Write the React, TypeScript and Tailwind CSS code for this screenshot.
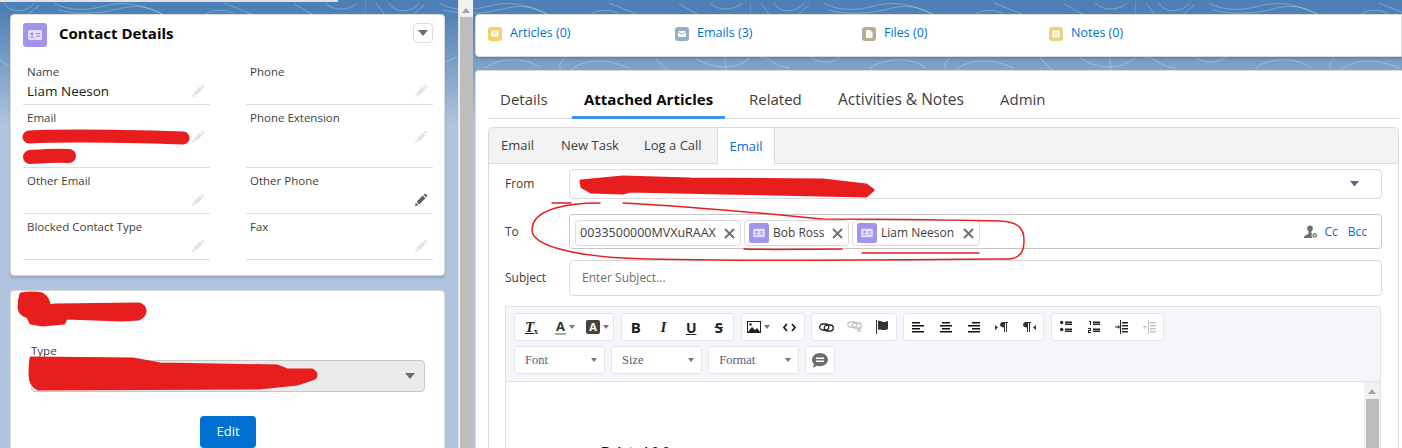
import React from 'react';

const ContactGlyph = ({ size }: { size: number }) => (
  <svg width={size} height={size} viewBox="0 0 24 24">
    <rect width="24" height="24" rx="3" fill="#a094ed" />
    <rect x="5" y="7" width="14" height="10" rx="1.5" fill="#e4e0fb" />
    <circle cx="9" cy="10.8" r="1.6" fill="#a094ed" />
    <path d="M6.6 14.8c.3-1.6 4.5-1.6 4.8 0z" fill="#a094ed" />
    <rect x="13" y="10" width="4" height="1.2" fill="#a094ed" />
    <rect x="13" y="12.6" width="4" height="1.2" fill="#a094ed" />
  </svg>
);

const PencilGlyph = ({ dark }: { dark?: boolean }) => (
  <svg width="14" height="14" viewBox="0 0 14 14" fill={dark ? '#5c5c5c' : '#e3e3e3'}>
    <path d="M1 13l.8-3.4 2.6 2.6zM2.6 8.8L8.8 2.6l2.6 2.6-6.2 6.2zM9.6 1.8l.8-.8c.4-.4 1-.4 1.3 0l1.3 1.3c.4.4.4.9 0 1.3l-.8.8z" />
  </svg>
);

const Caret = ({ color = '#706e6b', w = 10 }: { color?: string; w?: number }) => (
  <svg width={w} height={w * 0.6} viewBox="0 0 10 6">
    <path d="M0 0h10L5 6z" fill={color} />
  </svg>
);

const Field = ({ label, value, dark, tall }: { label: string; value?: string; dark?: boolean; tall?: boolean }) => (
  <div className={`relative border-b border-[#d8dde6] pl-[4px] pt-[5px] ${tall ? 'h-[63px]' : 'h-[46px]'}`}>
    <div className="text-[11.5px] leading-[16px] text-[#3e3e3c]">{label}</div>
    {value && <div className="text-[13.5px] leading-[20px] mt-[1px] text-[#181818]">{value}</div>}
    <div className="absolute right-[5px] top-[25px]">
      <PencilGlyph dark={dark} />
    </div>
  </div>
);

const TileIcon = ({ color, children }: { color: string; children: React.ReactNode }) => (
  <svg width="14" height="14" viewBox="0 0 14 14" className="shrink-0">
    <rect width="14" height="14" rx="3" fill={color} />
    {children}
  </svg>
);

const Related = ({ icon, label }: { icon: React.ReactNode; label: string }) => (
  <div className="w-[187px] flex items-center gap-[8px] text-[12.5px] text-[#0070d2]">
    {icon}
    <span>{label}</span>
  </div>
);

const Btn = ({ w = 27.75, children }: { w?: number; children: React.ReactNode }) => (
  <div className="flex items-center justify-center h-full" style={{ width: w }}>
    {children}
  </div>
);

const Group = ({ children }: { children: React.ReactNode }) => (
  <div className="h-[28px] flex items-center bg-white border border-[#e1e5ee] rounded-[3px]">{children}</div>
);

const Tool = ({ d, fill = '#111111' }: { d: string; fill?: string }) => (
  <svg width="14" height="14" viewBox="0 0 14 14">
    <path d={d} fill={fill} />
  </svg>
);

const lines = (rows: [number, number, number][]) =>
  rows.map(([x, y, w]) => `M${x} ${y}h${w}v1.6h-${w}z`).join('');

const SmallCaret = () => (
  <svg width="6" height="4" viewBox="0 0 6 4" className="ml-[3px]">
    <path d="M0 0h6L3 4z" fill="#777" />
  </svg>
);

const Drop = ({ label }: { label: string }) => (
  <div className="w-[90.5px] h-[28px] flex items-center justify-between pl-[10px] pr-[7px] bg-white border border-[#e1e5ee] rounded-[3px] text-[12.5px] text-[#5c5c70] font-['Liberation_Serif',serif]">
    <span>{label}</span>
    <SmallCaret />
  </div>
);

const Chip = ({ label, contact, w }: { label: string; contact?: boolean; w: number }) => (
  <div
    className={`h-[26px] flex items-center justify-between pl-[4px] pr-[5px] border border-[#dddbda] rounded-[4px] bg-white text-[#3e3e3c] ${contact ? 'text-[12px]' : 'text-[12.5px]'}`}
    style={{ width: w }}
  >
    <div className="flex items-center gap-[4px]">
      {contact && <ContactGlyph size={20} />}
      <span>{label}</span>
    </div>
    <svg width="11" height="11" viewBox="0 0 11 11">
      <path d="M1 1l9 9M10 1l-9 9" stroke="#706e6b" strokeWidth="1.8" />
    </svg>
  </div>
);

const FormRow = ({ label, h, mt, children, cls }: { label: string; h: number; mt: number; children: React.ReactNode; cls?: string }) => (
  <div className="flex items-center" style={{ marginTop: mt }}>
    <div className="w-[64px] text-[12px] text-[#3e3e3c]">{label}</div>
    <div
      className={`w-[813px] flex items-center border rounded-[4px] bg-white ${cls ?? 'border-[#dddbda]'}`}
      style={{ height: h }}
    >
      {children}
    </div>
  </div>
);

export default function App() {
  return (
    <div className="relative w-[1402px] h-[448px] overflow-hidden font-['Open_Sans',sans-serif] bg-gradient-to-b from-[#4c80b6] from-[10px] to-[#b0c4de] to-[125px]">
      {/* contour lines of the page backdrop, the tile repeats every 385px */}
      <svg className="absolute left-0 top-0" width="1402" height="130" fill="none">
        <defs>
          <pattern id="contour" x="-20" y="0" width="385" height="130" patternUnits="userSpaceOnUse">
            <g stroke="#ffffff" strokeOpacity="0.28">
              <path d="M0 2v12M11 3l8 11M24 3c4 10 24 10 30 0M59 5l-10 9" />
              <path d="M74 3c14 8 32 8 50 3 24-6 40 0 60 9" />
              <path d="M78 10c20 5 40 4 60-1s30-3 50 8" />
              <path d="M226 14c8-5 20-5 28 0M244 3l30 12M314 4l20 11M345 3c8 8 24 8 32 0" />
              <path d="M10 58c8-3 12 8 30 10M60 56c6 8 24 8 32 0M120 68c14-10 40-12 56 0M200 58c-6 4-6 8-4 12M206 70c8-8 30-14 58-2M290 58l12 12M330 58c20 12 40 12 55 0" />
              <path d="M0 100c8 6 14 14 6 24M352 40c12 14 4 30 16 44M368 84c-8 8-4 20 8 26" />
            </g>
          </pattern>
        </defs>
        <rect width="1402" height="130" fill="url(#contour)" />
      </svg>
      <div className="absolute left-0 top-0 w-[338px] h-[2px] bg-[#dfe3e8]" />

      <div className="relative flex h-full">
        {/* left column */}
        <div className="w-[458px] shrink-0 pl-[10px] pr-[13px] pt-[14px] flex flex-col gap-[14px]">
          <div className="h-[262px] shrink-0 bg-white rounded-[4px] border border-[#dddbda] shadow-[0_2px_2px_rgba(0,0,0,0.15)] px-[12px] pt-[8px]">
            <div className="flex items-center h-[24px]">
              <ContactGlyph size={24} />
              <div className="ml-[12px] -mt-[4px] text-[15px] font-bold text-[#080707]">Contact Details</div>
              <div className="ml-auto w-[20px] h-[20px] -mr-[1px] -mt-[4px] border border-[#dddbda] rounded-[4px] flex items-center justify-center">
                <Caret />
              </div>
            </div>
            <div className="grid grid-cols-[187px_187px] gap-x-[36px] mt-[12px]">
              <Field label="Name" value="Liam Neeson" />
              <Field label="Phone" />
              <Field label="Email" tall />
              <Field label="Phone Extension" tall />
              <Field label="Other Email" />
              <Field label="Other Phone" dark />
              <Field label="Blocked Contact Type" />
              <Field label="Fax" />
            </div>
          </div>

          <div className="flex-1 bg-white rounded-t-[4px] border border-[#dddbda] pl-[20px] pr-[19px] pt-[53px]">
            <div className="text-[11.5px] leading-[14px] text-[#3e3e3c]">Type</div>
            <div className="h-[32px] mt-[2px] bg-[#ecebea] border border-[#c9c7c5] rounded-[4px] flex items-center justify-end pr-[9px]">
              <Caret />
            </div>
            <div className="mt-[24px] mx-auto w-[56px] h-[32px] rounded-[4px] bg-[#0070d2] text-white text-[13px] flex items-center justify-center">
              Edit
            </div>
          </div>
        </div>

        {/* page scrollbar */}
        <div className="w-[15px] shrink-0 bg-[#f1f1f1] flex flex-col items-end border-l border-[#e3e3e3]">
          <svg width="8" height="5" viewBox="0 0 8 5" className="mt-[8px] mb-[4px] mr-[3px]">
            <path d="M0 5h8L4 0z" fill="#a3a3a3" />
          </svg>
          <div className="flex-1 w-[13px] bg-[#bdbdbd]" />
        </div>

        {/* right column */}
        <div className="flex-1 pt-[14px] pl-[2px] flex flex-col">
          <div className="h-[43px] shrink-0 bg-white rounded-l-[4px] border border-[#dddbda] shadow-[0_2px_2px_rgba(0,0,0,0.15)] flex items-center pl-[12px] pb-[4px]">
            <Related
              label="Articles (0)"
              icon={
                <TileIcon color="#f4d167">
                  <rect x="3.5" y="3.5" width="7" height="6" rx="1" fill="#fff" />
                  <rect x="5.5" y="4.5" width="1" height="3" fill="#f4d167" />
                  <rect x="7.5" y="4.5" width="1" height="3" fill="#f4d167" />
                </TileIcon>
              }
            />
            <Related
              label="Emails (3)"
              icon={
                <TileIcon color="#95aec5">
                  <rect x="3" y="4" width="8" height="6" rx="1" fill="#fff" />
                  <path d="M3 4.8l4 2.6 4-2.6" stroke="#95aec5" fill="none" />
                </TileIcon>
              }
            />
            <Related
              label="Files (0)"
              icon={
                <TileIcon color="#baac93">
                  <path d="M4 3h4l2.5 2.5V11H4z" fill="#fff" />
                </TileIcon>
              }
            />
            <Related
              label="Notes (0)"
              icon={
                <TileIcon color="#e6d478">
                  <rect x="3.5" y="3.5" width="7" height="7" rx="1" fill="#fff" />
                  <rect x="5" y="5.5" width="4" height="1" fill="#e6d478" />
                  <rect x="5" y="7.5" width="4" height="1" fill="#e6d478" />
                </TileIcon>
              }
            />
          </div>

          <div className="mt-[13px] flex-1 bg-white border-t border-l border-[#dddbda] rounded-tl-[4px] pl-[12px] pr-[3px]">
            {/* record tabs */}
            <div className="flex h-[48px] border-b border-[#dddbda] text-[15px] leading-[20px] text-[#3e3e3c]">
              <div className="w-[84px] pl-[12px] pt-[18px]">Details</div>
              <div className="w-[153px] pl-[12px] pt-[18px] font-bold text-[#080707] border-b-[3px] border-[#3f93f5] h-[48px]">
                Attached Articles
              </div>
              <div className="w-[89px] pl-[24px] pt-[18px]">Related</div>
              <div className="w-[162px] pl-[24px] pt-[18px] whitespace-nowrap text-[15.5px]">Activities &amp; Notes</div>
              <div className="pl-[24px] pt-[18px]">Admin</div>
            </div>

            <div className="mt-[8px] border border-[#dddbda] rounded-t-[4px] h-[400px]">
              {/* publisher tabs */}
              <div className="flex h-[36px] bg-[#f3f3f3] border-b border-[#dddbda] text-[13px] text-[#3e3e3c] rounded-t-[4px]">
                <div className="w-[72px] pl-[12px] flex items-center">Email</div>
                <div className="w-[83px] flex items-center">New Task</div>
                <div className="w-[73px] flex items-center">Log a Call</div>
                <div className="w-[58px] flex items-center justify-center bg-white border-x border-[#dddbda] h-[37px] text-[#0070d2]">
                  Email
                </div>
              </div>

              <div className="pl-[16px]">
                <FormRow label="From" h={30} mt={5}>
                  <div className="ml-auto mr-[22px]">
                    <Caret color="#54698d" w={9} />
                  </div>
                </FormRow>
                <FormRow label="To" h={35} mt={15} cls="border-[#c9c7c5]">
                  <div className="ml-[5px] mt-[3px] flex gap-[3px]">
                    <Chip label="0033500000MVXuRAAX" w={166} />
                    <Chip label="Bob Ross" contact w={105} />
                    <Chip label="Liam Neeson" contact w={128} />
                  </div>
                  <div className="ml-auto mr-[14px] flex items-center text-[12px] text-[#0070d2]">
                    <svg width="14" height="14" viewBox="0 0 14 14" className="mr-[6px]">
                      <circle cx="6" cy="3.4" r="2.8" fill="#706e6b" />
                      <path d="M4.6 6h2.8v2.4L10 9.6v3.4H0v-1.6l4.6-3z" fill="#706e6b" />
                      <circle cx="10.6" cy="10.4" r="2.7" fill="#706e6b" stroke="#fff" strokeWidth="1" />
                      <circle cx="10.6" cy="10.4" r="0.9" fill="#fff" />
                    </svg>
                    <span>Cc</span>
                    <span className="ml-[10px]">Bcc</span>
                  </div>
                </FormRow>
                <FormRow label="Subject" h={36} mt={11}>
                  <span className="ml-[12px] text-[12px] text-[#706e6b]">Enter Subject...</span>
                </FormRow>

                {/* rich text editor */}
                <div className="mt-[10px] w-[876px] border border-[#dfe3ec] h-[160px]">
                  <div className="h-[75px] bg-[#f4f6f9] border-b border-[#dfe3ec] pl-[8px] pt-[6px] flex flex-col gap-[5px]">
                    <div className="flex gap-[6.8px]">
                      <Group>
                        <Btn w={33}><span className="text-[15px] font-bold italic underline text-[#222] font-['Liberation_Serif',serif]">T<sub className="text-[8px] not-italic">x</sub></span></Btn>
                        <Btn w={34}>
                          <span className="text-[13px] font-bold text-[#333] border-b-2 border-[#aaa] leading-[13px] px-[1px]">A</span>
                          <SmallCaret />
                        </Btn>
                        <Btn w={31}>
                          <span className="w-[14px] h-[14px] rounded-[2px] bg-[#444] text-white text-[11px] font-bold flex items-center justify-center">A</span>
                          <SmallCaret />
                        </Btn>
                      </Group>
                      <Group>
                        <Btn><span className="text-[15px] font-bold text-[#222]">B</span></Btn>
                        <Btn><span className="text-[15px] font-bold italic text-[#222] font-['Liberation_Serif',serif]">I</span></Btn>
                        <Btn><span className="text-[14px] font-bold underline text-[#222]">U</span></Btn>
                        <Btn><span className="text-[15px] font-bold line-through text-[#222]">S</span></Btn>
                      </Group>
                      <Group>
                        <Btn w={33}>
                          <svg width="14" height="12" viewBox="0 0 14 12">
                            <rect x="0.5" y="0.5" width="13" height="11" fill="#fff" stroke="#222" />
                            <path d="M1 11l4-5 3 3 2-2 3 4z" fill="#222" />
                            <circle cx="3.5" cy="3.5" r="1.2" fill="#222" />
                          </svg>
                          <SmallCaret />
                        </Btn>
                        <Btn w={29}>
                          <svg width="13" height="9" viewBox="0 0 13 9" fill="none" stroke="#222" strokeWidth="1.8">
                            <path d="M4 1L1 4.5 4 8M9 1l3 3.5L9 8" />
                          </svg>
                        </Btn>
                      </Group>
                      <Group>
                        <Btn>
                          <svg width="15" height="9" viewBox="0 0 15 9" fill="none" stroke="#222" strokeWidth="1.3">
                            <rect x="0.7" y="1" width="9" height="6" rx="3" />
                            <rect x="5.3" y="2" width="9" height="6" rx="3" />
                          </svg>
                        </Btn>
                        <Btn>
                          <svg width="15" height="12" viewBox="0 0 15 12" fill="none" stroke="#c4c4c4" strokeWidth="1.3">
                            <rect x="0.7" y="1" width="9" height="5" rx="2.5" />
                            <rect x="5.3" y="2" width="9" height="5" rx="2.5" />
                            <path d="M10 7l4 4M14 7l-4 4" />
                          </svg>
                        </Btn>
                        <Btn>
                          <Tool d="M1 0h1v14H1zM3 1c3-1 4 1 5 1s3 0 5-1v8c-2 1-3 1-5 1s-2-1-5 0z" fill="#333" />
                        </Btn>
                      </Group>
                      <Group>
                        <Btn><Tool d={lines([[1, 2, 8], [1, 5, 12], [1, 8, 8], [1, 11, 12]])} /></Btn>
                        <Btn><Tool d={lines([[3, 2, 8], [1, 5, 12], [3, 8, 8], [1, 11, 12]])} /></Btn>
                        <Btn><Tool d={lines([[5, 2, 8], [1, 5, 12], [5, 8, 8], [1, 11, 12]])} /></Btn>
                        <Btn><Tool d="M0 5l3 2.5L0 10zM7 2h6v1h-1v9h-1V3h-1v9H9V7.5C7 7.5 5 6.5 5 4.8S7 2 7 2z" fill="#333" /></Btn>
                        <Btn><Tool d="M3 2h6v1H8v9H7V3H6v9H5V7.5C3 7.5 1 6.5 1 4.8S3 2 3 2zM14 5v5l-3-2.5z" fill="#333" /></Btn>
                      </Group>
                      <Group>
                        <Btn><Tool d={`M1 2.5a1.7 1.7 0 1 0 3.4 0 1.7 1.7 0 1 0-3.4 0zM1 9.5a1.7 1.7 0 1 0 3.4 0 1.7 1.7 0 1 0-3.4 0z${lines([[6, 1.5, 7], [6, 3.5, 7], [6, 8.5, 7], [6, 10.5, 7]])}`} fill="#222" /></Btn>
                        <Btn><Tool d={`M2 1h2v4H3V2H2zM1 8h3v3H2v1h2v1H1v-3h2V9H1z${lines([[6, 1.5, 7], [6, 3.5, 7], [6, 8.5, 7], [6, 10.5, 7]])}`} fill="#222" /></Btn>
                        <Btn><Tool d={`M6 0h1v14H6zM1 6.5h3V5l2 2-2 2V7.5H1z${lines([[8, 2, 6], [8, 5, 6], [8, 8, 6], [8, 11, 6]])}`} fill="#222" /></Btn>
                        <Btn><Tool d={`M6 0h1v14H6zM5 6.5H3V5L1 7l2 2V7.5h2z${lines([[8, 2, 6], [8, 5, 6], [8, 8, 6], [8, 11, 6]])}`} fill="#c4c4c4" /></Btn>
                      </Group>
                    </div>
                    <div className="flex gap-[6.6px]">
                      <Drop label="Font" />
                      <Drop label="Size" />
                      <Drop label="Format" />
                      <div className="w-[30px] h-[28px] bg-white border border-[#e1e5ee] rounded-[3px] flex items-center justify-center">
                        <svg width="16" height="15" viewBox="0 0 16 15">
                          <path d="M8 0c4.4 0 8 2.9 8 6.6s-3.6 6.6-8 6.6c-1.2 0-2.2-.2-3.2-.5L1 15l1-3.7C.7 10.1 0 8.5 0 6.6 0 2.9 3.6 0 8 0z" fill="#706e6b" />
                          <path d="M4 4.5h8v1.4H4zM4 7.5h8v1.4H4z" fill="#fff" />
                        </svg>
                      </div>
                    </div>
                  </div>
                  <div className="flex">
                    <div className="flex-1 pl-[95px] pt-[62px] text-[13px] leading-[16px] font-bold text-[#111111] font-['Liberation_Sans',sans-serif]">
                      Related 0.0
                    </div>
                    <div className="w-[16px] h-[80px] bg-[#f1f1f1] flex flex-col items-center">
                      <svg width="8" height="5" viewBox="0 0 8 5" className="mt-[7px] mb-[5px]">
                        <path d="M0 5h8L4 0z" fill="#a3a3a3" />
                      </svg>
                      <div className="flex-1 w-[13px] bg-[#bdbdbd]" />
                    </div>
                  </div>
                </div>
              </div>
            </div>
          </div>
        </div>
      </div>

      {/* hand drawn marks on top of the screenshot */}
      <svg className="absolute left-0 top-0 pointer-events-none" width="1402" height="448" fill="none">
        <g stroke="#e81e1e" strokeLinecap="round" strokeLinejoin="round">
          <path d="M29 137c40-2 90-1 154 1" strokeWidth="13" />
          <path d="M30 157c14-1 26-2 39-1" strokeWidth="14" />
          <path d="M552 203h19" strokeWidth="1.5" />
          <path d="M600 203C570 203 532 208 532 230c0 15 38 25 91 28 77 4 277 2 387 1 12-2 14-9 14-19 0-12-6-18-24-19-50-1-110-2-177-2-43-4-123-12-200-16" strokeWidth="1.5" />
          <path d="M744 249c30 1 60 0 98 0" strokeWidth="1.5" />
          <path d="M862 253h117" strokeWidth="1.5" />
        </g>
        <g fill="#e81e1e" stroke="#e81e1e" strokeWidth="3" strokeLinejoin="round">
          <path d="M21 294q11-2 21 0 7 4 7 12l6-1 84-1q6 2 6 7t-6 8l-17 1-56-2-2 5-21 2-12-2-3-6q-9-3-9-10t2-13z" />
          <path d="M31 358l102 1 27 5 117 2 10 4h25q4 2 4 5t-4 4l-15 5-38 4-221 1q-8-4-8-14t1-17z" />
          <path d="M581 181l42-4 67 2 133 1 43 5 7 5-7 6-143-3-93-2-7 2-32-1-9-5z" />
        </g>
      </svg>
    </div>
  );
}
